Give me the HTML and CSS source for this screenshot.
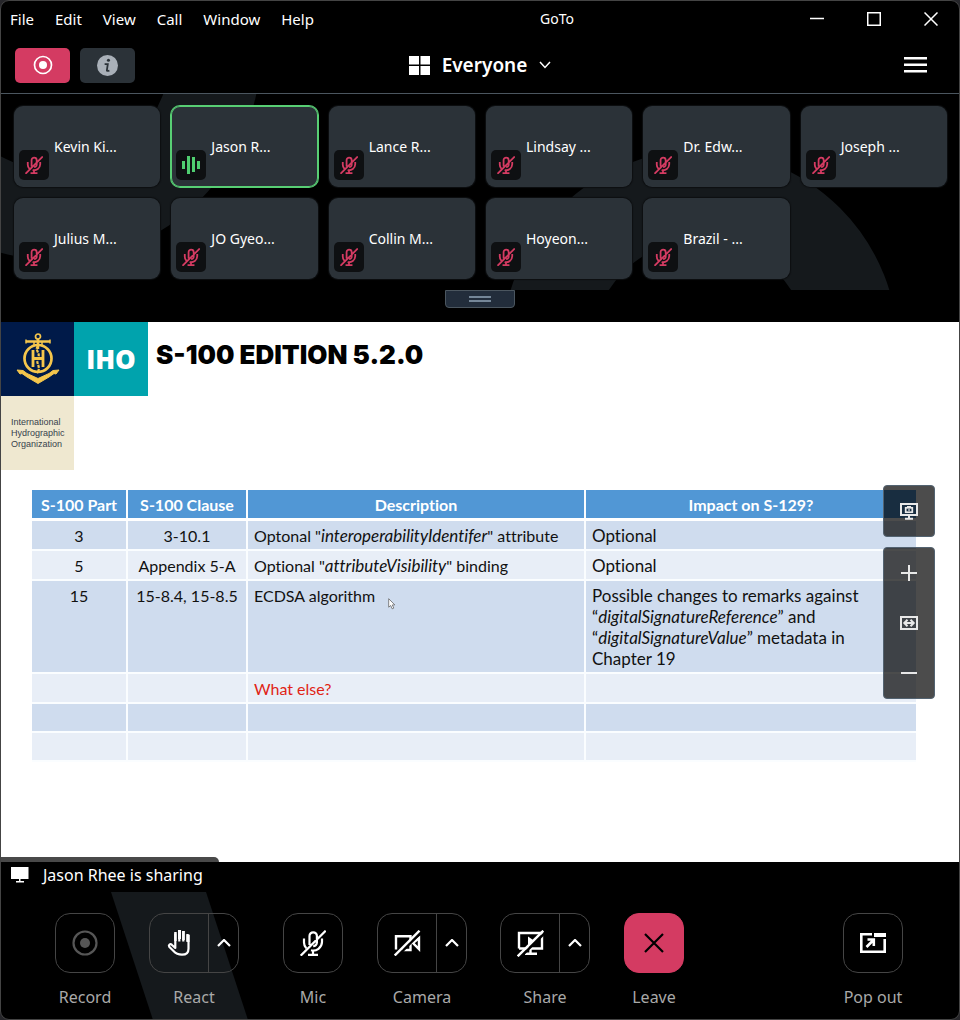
FILE: index.html
```html
<!DOCTYPE html>
<html lang="en">
<head>
<meta charset="utf-8">
<meta name="viewport" content="width=device-width, initial-scale=1">
<title>GoTo</title>
<link rel="stylesheet" href="styles.css">
</head>
<body>
<svg class="defs" aria-hidden="true">
  <symbol id="mic-off" viewBox="0 0 26 26">
    <path fill="none" stroke="currentColor" d="M9.500 15V6a3.700 3.700 0 0 1 7.400 0V12.500a3.700 3.700 0 0 1-3.700 3.700M4 8.500V12.500Q4 16 6.300 18.300M22 8.500V12a8.800 8.800 0 0 1-11 8.300M13 21v4M8 24.800h10M.7 25.700 25.700.7"/>
  </symbol>
  <symbol id="chevron-up" viewBox="0 0 14 8"><path fill="none" stroke="currentColor" stroke-width="2.200" d="M1 7l6-6 6 6"/></symbol>
</svg>
<div class="window">
  <header class="titlebar">
    <nav class="menu" aria-label="Application menu">
      <button type="button">File</button><button type="button">Edit</button><button type="button">View</button><button type="button">Call</button><button type="button">Window</button><button type="button">Help</button>
    </nav>
    <h1 class="title">GoTo</h1>
    <div class="window-controls">
      <button type="button" aria-label="Minimize"><svg width="14" height="14" viewBox="0 0 14 14"><path d="M0 6.500h14"/></svg></button>
      <button type="button" aria-label="Maximize"><svg width="14" height="14" viewBox="0 0 14 14"><path d="M.75.75h12.500v12.500H.75z"/></svg></button>
      <button type="button" aria-label="Close"><svg width="14" height="14" viewBox="0 0 14 14"><path d="M.5.5l13 13M13.500.5l-13 13"/></svg></button>
    </div>
  </header>

  <div class="toolbar">
    <div class="status">
      <button type="button" class="chip recording" aria-label="Recording"><svg width="20" height="20" viewBox="0 0 20 20"><circle cx="10" cy="10" r="8.500" fill="none" stroke="#fff" stroke-width="1.700"/><circle cx="10" cy="10" r="4" fill="#fff"/></svg></button>
      <button type="button" class="chip" aria-label="Meeting information"><svg width="21" height="21" viewBox="0 0 22 22"><circle cx="11" cy="11" r="11" fill="#a9b0b8"/><circle cx="12" cy="5.500" r="1.600" fill="#2b3238"/><path d="M8 9.500h3.300L10.300 16.300q0 .8 2.700 0" fill="none" stroke="#2b3238" stroke-width="1.900"/></svg></button>
    </div>
    <button type="button" class="layout">
      <svg width="21" height="19" viewBox="0 0 21 19"><path fill="#fff" d="M0 0h10v8.500H0zM11.500 0H21v8.500h-9.500zM0 10h10v9H0zM11.500 10H21v9h-9.500z"/></svg>
      <span>Everyone</span>
      <svg width="12" height="8" viewBox="0 0 12 8"><path d="M1 1l5 5.500L11 1" fill="none" stroke="#fff" stroke-width="1.500"/></svg>
    </button>
    <button type="button" class="more" aria-label="Menu"><svg width="23" height="16" viewBox="0 0 23 16"><path d="M0 0h23v2.500H0zM0 6.500h23V9H0zM0 13h23v2.500H0z" fill="#fff"/></svg></button>
  </div>

  <section class="people" aria-label="Participants">
    <svg class="backdrop" width="958" height="197" viewBox="1 94 958 197" aria-hidden="true"><g fill="none" stroke="#15191c" stroke-width="90"><circle cx="55" cy="55" r="160"/><circle cx="700" cy="348" r="153"/></g></svg>
    <ul class="tiles">
      <li class="tile"><span class="badge"><svg><use href="#mic-off"/></svg></span>Kevin Ki...</li>
      <li class="tile speaking"><span class="badge"><svg viewBox="0 0 18 18"><path fill="#4fce70" d="M0 5h3v8H0zM5 0h3v18H5zM10 1h3v15h-3zM15 5h3v8h-3z"/></svg></span>Jason R...</li>
      <li class="tile"><span class="badge"><svg><use href="#mic-off"/></svg></span>Lance R...</li>
      <li class="tile"><span class="badge"><svg><use href="#mic-off"/></svg></span>Lindsay ...</li>
      <li class="tile"><span class="badge"><svg><use href="#mic-off"/></svg></span>Dr. Edw...</li>
      <li class="tile"><span class="badge"><svg><use href="#mic-off"/></svg></span>Joseph ...</li>
      <li class="tile"><span class="badge"><svg><use href="#mic-off"/></svg></span>Julius M...</li>
      <li class="tile"><span class="badge"><svg><use href="#mic-off"/></svg></span>JO Gyeo...</li>
      <li class="tile"><span class="badge"><svg><use href="#mic-off"/></svg></span>Collin M...</li>
      <li class="tile"><span class="badge"><svg><use href="#mic-off"/></svg></span>Hoyeon...</li>
      <li class="tile"><span class="badge"><svg><use href="#mic-off"/></svg></span>Brazil - ...</li>
    </ul>
  </section>
  <div class="splitter"><button type="button" aria-label="Resize participants"><svg width="22" height="6" viewBox="0 0 22 6"><path d="M0 1h22M0 5h22" stroke="#91a5b8" stroke-width="1.500"/></svg></button></div>

  <main class="slide">
    <div class="slide-head">
      <div class="logo">
        <div class="emblem"><svg width="44" height="52" viewBox="0 0 44 52" fill="none" stroke="#f5c64c">
          <circle cx="22" cy="3.500" r="2.500" stroke-width="1.700"/><path stroke-width="2.500" d="M10 8.500h24M22 6v10"/><path stroke-width="1.500" d="M10 6.500v4M34 6.500v4M18 8v5M26 8v5"/>
          <circle cx="22" cy="25.500" r="13.500" stroke-width="2.700"/>
          <path stroke-width="2.800" d="M17 17v17M27 17v17M17 25.500h10"/><path stroke-width="2.200" stroke-dasharray="3 1" d="M22 13c-4 4 3 7 0 12s4 9-1 15"/>
          <path fill="#f5c64c" stroke-width="1" d="M1 37l6 .5 4 3 11 5 11-5 4-3 6-.5-3 4-2-.5-5 3.500-11 6.500-11-6.500-5-3.500-2 .5z"/></svg></div>
        <div class="iho">IHO</div>
        <div class="org">International<br>Hydrographic<br>Organization</div>
      </div>
      <h2>S-100 EDITION 5.2.0</h2>
    </div>
    <table>
      <colgroup><col class="c-part"><col class="c-clause"><col class="c-desc"><col class="c-impact"></colgroup>
      <thead><tr><th>S-100 Part</th><th>S-100 Clause</th><th>Description</th><th>Impact on S-129?</th></tr></thead>
      <tbody>
        <tr><td>3</td><td>3-10.1</td><td>Optonal "<em>interoperabilityIdentifer</em>" attribute</td><td>Optional</td></tr>
        <tr><td>5</td><td>Appendix 5-A</td><td>Optional "<em>attributeVisibility</em>" binding</td><td>Optional</td></tr>
        <tr><td>15</td><td>15-8.4, 15-8.5</td><td>ECDSA algorithm</td><td>Possible changes to remarks against<br>“<em>digitalSignatureReference</em>” and<br>“<em>digitalSignatureValue</em>” metadata in<br>Chapter 19</td></tr>
        <tr><td></td><td></td><td class="open-question">What else?</td><td></td></tr>
        <tr><td></td><td></td><td></td><td></td></tr>
        <tr><td></td><td></td><td></td><td></td></tr>
      </tbody>
    </table>
    <svg class="pointer" width="8" height="12" viewBox="0 0 8 12" aria-hidden="true"><path d="M.7.7v8.500l2-1.700 1.500 3.300 1.600-.7-1.500-3.200h2.500z" fill="#fff" stroke="#666" stroke-width=".8"/></svg>
    <div class="view-tools">
      <div class="tool-group"><button type="button" aria-label="Take screenshot"><svg width="18" height="17" viewBox="0 0 18 17"><path d="M1 1h16v11H1zM9 12v3.500M5 15.800h8" fill="none" stroke="#e8e8e8" stroke-width="2"/><rect x="5.700" y="4.800" width="6.600" height="4.400" fill="none" stroke="#e8e8e8" stroke-width="1.700"/><path d="M7 3h4v1.500H7zM8.300 6.300h1.500v1.500H8.300z" fill="#e8e8e8"/></svg></button></div>
      <div class="tool-group">
        <button type="button" aria-label="Zoom in"><svg width="16" height="16" viewBox="0 0 16 16"><path d="M0 8h16M8 0v16" stroke="#e8e8e8" stroke-width="2"/></svg></button>
        <button type="button" aria-label="Fit to width"><svg width="18" height="14" viewBox="0 0 18 14"><path d="M1 1h16v12H1zM4.500 7h9M7.500 3.800 4.300 7l3.200 3.200M10.500 3.800 13.700 7l-3.200 3.200" fill="none" stroke="#e8e8e8" stroke-width="2"/></svg></button>
        <button type="button" aria-label="Zoom out"><svg width="16" height="16" viewBox="0 0 16 16"><path d="M0 8h16" stroke="#e8e8e8" stroke-width="2"/></svg></button>
      </div>
    </div>
    <div class="share-tab"></div>
  </main>

  <div class="sharing"><svg width="18" height="16" viewBox="0 0 18 16"><path fill="#fff" d="M0 0h17.500v12h-8v2H13v1.500H5V14h3v-2H0z"/></svg>Jason Rhee is sharing</div>

  <footer class="controls">
    <svg class="stripe" width="137" height="128" viewBox="0 0 137 128" aria-hidden="true"><path fill="#15191c" d="M0 0h95l42 128H42z"/></svg>
    <div class="group group-room">
      <div class="control"><div class="box"><button type="button" aria-labelledby="l-rec"><svg width="26" height="26" viewBox="0 0 26 26"><circle cx="13" cy="13" r="11.500" fill="none" stroke="#565656" stroke-width="2.200"/><circle cx="13" cy="13" r="5" fill="#565656"/></svg></button></div><span id="l-rec">Record</span></div>
      <div class="control split"><div class="box"><button type="button" aria-labelledby="l-react"><svg width="24" height="26" viewBox="0 0 24 26"><path fill="none" stroke="#fff" stroke-width="2.200" stroke-linejoin="round" d="M8.300 15.500V3.500M12.300 11.500V1M16.300 11.500V1M20.500 11.500V4M8.300 15.500v2.500l-3.600-3.300c-1.500-1.200-3.500.3-2.500 2L6.500 21c2 2.300 4 3.700 8.500 3.700s6.500-2.500 6.500-6V5"/><path fill="#fff" d="M7.200 2h2.500v9H7.200zM11 0h3v9h-3zM15.200 1h2.600v9h-2.600zM19.500 4.500h3V12h-3z"/></svg></button><button type="button" aria-label="React options"><svg width="14" height="8"><use href="#chevron-up"/></svg></button></div><span id="l-react">React</span></div>
    </div>
    <div class="group group-devices">
      <div class="control"><div class="box"><button type="button" aria-labelledby="l-mic"><svg width="26" height="26"><use href="#mic-off"/></svg></button></div><span id="l-mic">Mic</span></div>
      <div class="control split"><div class="box"><button type="button" aria-labelledby="l-cam"><svg width="27" height="26" viewBox="0 0 27 26"><path fill="none" stroke="#fff" stroke-width="2.400" d="M2 19.500V6.200h14.500V20H8M19 13l6-5v11z"/><path stroke="#000" stroke-width="2.500" d="M2.500 27 27.500 2"/><path stroke="#fff" stroke-width="2.400" d="M.7 25.500 25.500.7"/></svg></button><button type="button" aria-label="Camera options"><svg width="14" height="8"><use href="#chevron-up"/></svg></button></div><span id="l-cam">Camera</span></div>
    </div>
    <div class="group">
      <div class="control split"><div class="box"><button type="button" aria-labelledby="l-share"><svg width="27" height="27" viewBox="0 0 27 27"><path fill="none" stroke="#fff" stroke-width="2.400" d="M2 18.500V3h23v15.500H2M13.500 18.500v5M8 23.800h12"/><path fill="#fff" d="M11 6.500l6.500 4.500-6.500 4z"/><path stroke="#000" stroke-width="2.500" d="M2.500 28 28.200 2.500"/><path stroke="#fff" stroke-width="2.400" d="M.7 26.300 26.300.7"/></svg></button><button type="button" aria-label="Share options"><svg width="14" height="8"><use href="#chevron-up"/></svg></button></div><span id="l-share">Share</span></div>
      <div class="control leave"><div class="box"><button type="button" aria-labelledby="l-leave"><svg width="20" height="20" viewBox="0 0 20 20"><path d="M1 1l18 18M19 1 1 19" stroke="#000" stroke-width="2.200"/></svg></button></div><span id="l-leave">Leave</span></div>
    </div>
    <div class="group group-end">
      <div class="control"><div class="box"><button type="button" aria-labelledby="l-pop"><svg width="26" height="20" viewBox="0 0 26 20"><path fill="none" stroke="#fff" stroke-width="2.600" d="M12 1.300H1.300v17.400h23.400V6"/><path fill="none" stroke="#fff" stroke-width="4" d="M14 2h12"/><path fill="none" stroke="#fff" stroke-width="2.600" d="M6.500 14l6.500-6.500M7.500 6.500h6.300v6.500"/></svg></button></div><span id="l-pop">Pop out</span></div>
    </div>
  </footer>
</div>
</body>
</html>
```
FILE: styles.css
```css
* { box-sizing: border-box; }
body { margin: 0; background: #26262a; color: #fff; font-family: "Noto Sans", sans-serif; }
button { margin: 0; padding: 0; border: 0; background: none; color: inherit; font: inherit; display: flex; align-items: center; justify-content: center; }
svg { display: block; flex: none; }
ul { list-style: none; margin: 0; padding: 0; }
.defs { position: absolute; width: 0; height: 0; }

.window { min-height: 100vh; display: flex; flex-direction: column; background: #000; border: 1px solid #444; border-radius: 9px; overflow: hidden; }

.titlebar { display: flex; align-items: center; height: 36px; }
.menu { display: flex; gap: 21px; padding-left: 9px; font-size: 15px; line-height: 20px; }
.title { flex: 1; margin: 0; padding-left: 12px; text-align: center; font-size: 14px; line-height: 20px; font-weight: 400; }
.window-controls { display: flex; }
.window-controls button { width: 57px; height: 36px; }
.window-controls svg { fill: none; stroke: #fff; stroke-width: 1.5; }

.toolbar { display: grid; grid-template-columns: 1fr auto 1fr; align-items: center; height: 57px; padding: 0 14px; border-bottom: 1px solid #4b565f; }
.status { display: flex; gap: 10px; }
.chip { width: 55px; height: 35px; border-radius: 5px; background: #2b3238; }
.chip.recording { background: #d43b62; }
.layout { gap: 12px; font-size: 19px; line-height: 26px; font-weight: 600; }
.more { justify-self: end; padding-right: 18px; }

.people { position: relative; padding: 12px 12px 11px 13px; overflow: hidden; }
.backdrop { position: absolute; left: 0; top: 0; }
.tiles { position: relative; display: grid; grid-template-columns: repeat(6, 1fr); gap: 11px; }
.tile { position: relative; display: flex; align-items: center; height: 81px; padding-left: 40px; border-radius: 9px; background: #2b3238; box-shadow: 0 0 1px 1px #0d0f11; font-size: 14px; line-height: 20px; white-space: nowrap; }
.tile.speaking { box-shadow: 0 0 0 1px #58cf74, inset 0 0 0 1px #58cf74; }
.badge { position: absolute; left: 5px; bottom: 7px; width: 30px; height: 30px; display: flex; align-items: center; justify-content: center; border-radius: 5px; background: #0e1012; color: #d43b62; }
.badge svg { width: 18px; height: 18px; stroke-width: 2.6; }

.splitter { display: flex; justify-content: center; height: 32px; }
.splitter button { width: 70px; height: 18px; border: 1px solid #4b565f; border-radius: 0 0 4px 4px; background: #222d3b; }

.slide { position: relative; flex: 1; background: #fff; color: #111; padding-bottom: 90px; }
.slide-head { display: flex; gap: 8px; }
.logo { display: grid; grid-template-columns: 73px 74px; grid-template-rows: 74px 74px; }
.emblem { display: flex; align-items: center; justify-content: center; background: #001a49; }
.iho { display: flex; align-items: center; justify-content: center; background: #00a3ad; color: #fff; font: 800 26px/32px "Open Sans", sans-serif; }
.org { display: flex; align-items: center; padding-left: 10px; background: #efe8d0; color: #37424c; font: 9px/11px "Liberation Sans", sans-serif; }
.slide h2 { margin: 18px 0 0; font: 900 26px/30px Inter, sans-serif; color: #000; }

.slide table { width: calc(100% - 74px); margin: 20px 43px 0 31px; border-collapse: collapse; table-layout: fixed; font: 16px/21px Lato, sans-serif; font-variant-ligatures: none; }
.c-part { width: 95px; }
.c-clause { width: 120px; }
.c-desc { width: 338px; }
th, td { height: 29px; padding: 4px 6px 3px; vertical-align: top; text-align: left; border: solid #fafdff; border-width: 0 0 2px 2px; }
th:first-child, td:first-child { border-left: 0; }
th { padding: 4px 0 3px; background: #5197d5; color: #fff; text-align: center; }
thead tr { border-bottom: 3px solid #fff; }
td:nth-child(-n+2) { padding-left: 0; padding-right: 0; text-align: center; }
td:last-child, td em { font-size: 17px; }
tbody tr:nth-child(odd) { background: #cfdcee; }
tbody tr:nth-child(even) { background: #e8eef7; }
td.open-question { color: #e02315; }

.pointer { position: absolute; left: 387px; top: 276px; }
.view-tools { position: absolute; top: 163px; right: 24px; display: grid; gap: 10px; }
.tool-group { border: 1px solid #536371; border-radius: 4px; background: rgba(0, 0, 0, .7); }
.tool-group button { width: 50px; height: 50px; }
.share-tab { position: absolute; left: 0; bottom: 0; width: 218px; height: 5px; border-radius: 0 5px 0 0; background: #494949; }

.sharing { display: flex; align-items: center; gap: 14px; height: 30px; padding: 0 10px 4px; font-size: 16px; line-height: 24px; }

.controls { position: relative; display: flex; padding: 21px 56px 11px 54px; height: 127px; }
.stripe { position: absolute; left: 110px; top: 0; }
.group { position: relative; display: flex; gap: 34px; }
.group-room { margin-right: 44px; }
.group-devices { margin-right: 33px; }
.group-end { margin-left: auto; }
.control { width: 60px; display: flex; flex-direction: column; align-items: center; gap: 12px; color: #a9a9a9; font-size: 16px; line-height: 24px; white-space: nowrap; }
.control.split { width: 90px; }
.box { flex: none; display: flex; width: 100%; height: 60px; border: 1px solid #454545; border-radius: 15px; color: #fff; overflow: hidden; stroke-width: 2.2; }
.box button { flex: 1; }
.split .box button:last-child { flex: none; width: 30px; border-left: 1px solid #454545; }
.leave .box { background: #d43b62; border-color: #d43b62; }
```
